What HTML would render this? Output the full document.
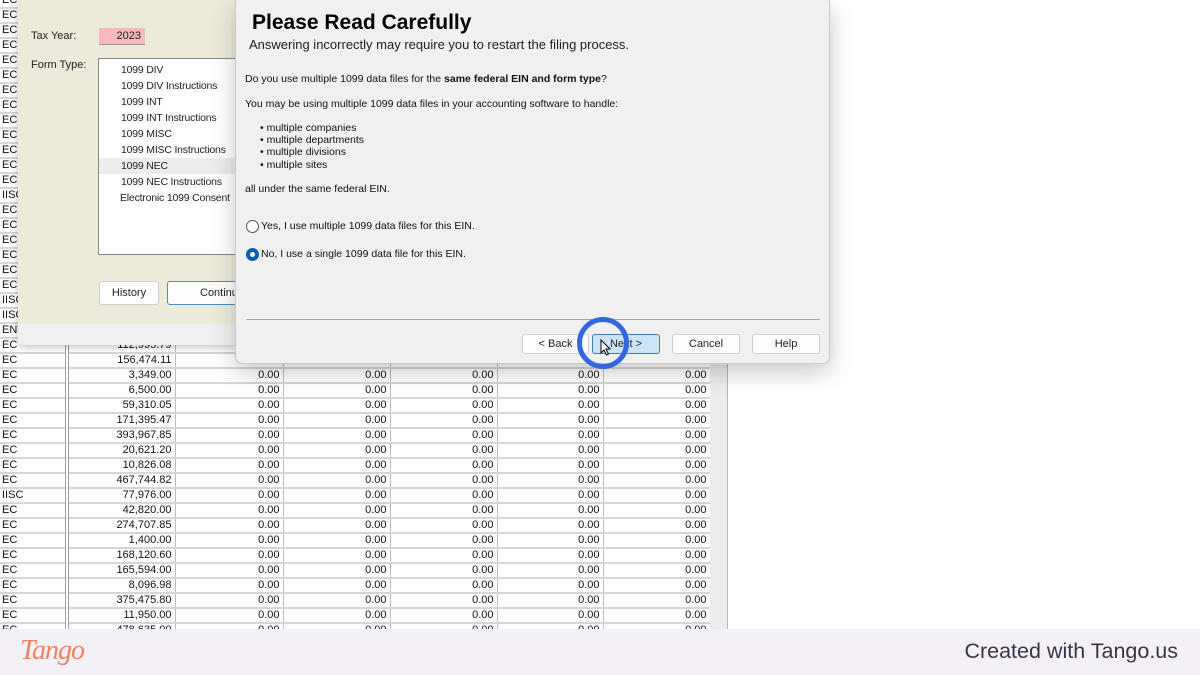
<!DOCTYPE html>
<html><head><meta charset="utf-8"><style>
*{margin:0;padding:0;box-sizing:border-box}
body{width:1200px;height:675px;overflow:hidden;background:#fff;font-family:"Liberation Sans",sans-serif;position:relative}
#tbl{position:absolute;left:0;top:-7px;border-collapse:collapse;table-layout:fixed;font-size:11px;color:#111}
#tbl td{height:15px;padding:0 3px;border-bottom:2px solid #d6d6d6;border-right:1px solid #bdbdbd;white-space:nowrap;overflow:hidden;text-align:right;line-height:13px;background:#fff}
#tbl td:first-child{text-align:left;padding-left:2px;border-right:4px double #a0a0a0}
.gray{position:absolute;left:710px;top:0;width:18px;height:630px;background:#ececec;border-right:1px solid #b8b8b8}
.left{position:absolute;left:18px;top:0;width:222px;height:345px;background:#ecead9;border-radius:0 0 6px 6px;box-shadow:0 2px 8px rgba(0,0,0,.25);font-size:11px;color:#222}
.left .strip{position:absolute;left:0;bottom:0;width:100%;height:21px;background:#f0f0f0;border-radius:0 0 6px 6px}
.dlg{position:absolute;left:235px;top:0;width:595px;height:364px;background:#f0f0f0;border:1px solid #c8c8c8;border-top:none;border-radius:0 0 7px 7px;box-shadow:0 8px 24px rgba(0,0,0,.22);font-size:10.5px;color:#111}
.btn{position:absolute;height:20px;background:#fdfdfd;border:1px solid #cfcfcf;border-radius:3px;text-align:center;line-height:18px;font-size:11px;color:#222}
.footer{position:absolute;left:0;top:629px;width:1200px;height:46px;background:#f3f1f6}
.radio{position:absolute;width:13px;height:13px;border-radius:50%;border:1px solid #555;background:#fff}
</style></head><body>
<table id="tbl">
<colgroup><col style="width:67px"><col style="width:108px"><col style="width:108px"><col style="width:107px"><col style="width:107px"><col style="width:106px"><col style="width:107px"></colgroup>
<tr><td>EC</td><td></td><td></td><td></td><td></td><td></td><td></td></tr>
<tr><td>EC</td><td></td><td></td><td></td><td></td><td></td><td></td></tr>
<tr><td>EC</td><td></td><td></td><td></td><td></td><td></td><td></td></tr>
<tr><td>EC</td><td></td><td></td><td></td><td></td><td></td><td></td></tr>
<tr><td>EC</td><td></td><td></td><td></td><td></td><td></td><td></td></tr>
<tr><td>EC</td><td></td><td></td><td></td><td></td><td></td><td></td></tr>
<tr><td>EC</td><td></td><td></td><td></td><td></td><td></td><td></td></tr>
<tr><td>EC</td><td></td><td></td><td></td><td></td><td></td><td></td></tr>
<tr><td>EC</td><td></td><td></td><td></td><td></td><td></td><td></td></tr>
<tr><td>EC</td><td></td><td></td><td></td><td></td><td></td><td></td></tr>
<tr><td>EC</td><td></td><td></td><td></td><td></td><td></td><td></td></tr>
<tr><td>EC</td><td></td><td></td><td></td><td></td><td></td><td></td></tr>
<tr><td>EC</td><td></td><td></td><td></td><td></td><td></td><td></td></tr>
<tr><td>IISC</td><td></td><td></td><td></td><td></td><td></td><td></td></tr>
<tr><td>EC</td><td></td><td></td><td></td><td></td><td></td><td></td></tr>
<tr><td>EC</td><td></td><td></td><td></td><td></td><td></td><td></td></tr>
<tr><td>EC</td><td></td><td></td><td></td><td></td><td></td><td></td></tr>
<tr><td>EC</td><td></td><td></td><td></td><td></td><td></td><td></td></tr>
<tr><td>EC</td><td></td><td></td><td></td><td></td><td></td><td></td></tr>
<tr><td>EC</td><td></td><td></td><td></td><td></td><td></td><td></td></tr>
<tr><td>IISC</td><td></td><td></td><td></td><td></td><td></td><td></td></tr>
<tr><td>IISC</td><td></td><td></td><td></td><td></td><td></td><td></td></tr>
<tr><td>ENT</td><td></td><td></td><td></td><td></td><td></td><td></td></tr>
<tr><td>EC</td><td>112,995.79</td><td></td><td></td><td></td><td></td><td></td></tr>
<tr><td>EC</td><td>156,474.11</td><td></td><td></td><td></td><td></td><td></td></tr>
<tr><td>EC</td><td>3,349.00</td><td>0.00</td><td>0.00</td><td>0.00</td><td>0.00</td><td>0.00</td></tr>
<tr><td>EC</td><td>6,500.00</td><td>0.00</td><td>0.00</td><td>0.00</td><td>0.00</td><td>0.00</td></tr>
<tr><td>EC</td><td>59,310.05</td><td>0.00</td><td>0.00</td><td>0.00</td><td>0.00</td><td>0.00</td></tr>
<tr><td>EC</td><td>171,395.47</td><td>0.00</td><td>0.00</td><td>0.00</td><td>0.00</td><td>0.00</td></tr>
<tr><td>EC</td><td>393,967.85</td><td>0.00</td><td>0.00</td><td>0.00</td><td>0.00</td><td>0.00</td></tr>
<tr><td>EC</td><td>20,621.20</td><td>0.00</td><td>0.00</td><td>0.00</td><td>0.00</td><td>0.00</td></tr>
<tr><td>EC</td><td>10,826.08</td><td>0.00</td><td>0.00</td><td>0.00</td><td>0.00</td><td>0.00</td></tr>
<tr><td>EC</td><td>467,744.82</td><td>0.00</td><td>0.00</td><td>0.00</td><td>0.00</td><td>0.00</td></tr>
<tr><td>IISC</td><td>77,976.00</td><td>0.00</td><td>0.00</td><td>0.00</td><td>0.00</td><td>0.00</td></tr>
<tr><td>EC</td><td>42,820.00</td><td>0.00</td><td>0.00</td><td>0.00</td><td>0.00</td><td>0.00</td></tr>
<tr><td>EC</td><td>274,707.85</td><td>0.00</td><td>0.00</td><td>0.00</td><td>0.00</td><td>0.00</td></tr>
<tr><td>EC</td><td>1,400.00</td><td>0.00</td><td>0.00</td><td>0.00</td><td>0.00</td><td>0.00</td></tr>
<tr><td>EC</td><td>168,120.60</td><td>0.00</td><td>0.00</td><td>0.00</td><td>0.00</td><td>0.00</td></tr>
<tr><td>EC</td><td>165,594.00</td><td>0.00</td><td>0.00</td><td>0.00</td><td>0.00</td><td>0.00</td></tr>
<tr><td>EC</td><td>8,096.98</td><td>0.00</td><td>0.00</td><td>0.00</td><td>0.00</td><td>0.00</td></tr>
<tr><td>EC</td><td>375,475.80</td><td>0.00</td><td>0.00</td><td>0.00</td><td>0.00</td><td>0.00</td></tr>
<tr><td>EC</td><td>11,950.00</td><td>0.00</td><td>0.00</td><td>0.00</td><td>0.00</td><td>0.00</td></tr>
<tr><td>EC</td><td>478,635.00</td><td>0.00</td><td>0.00</td><td>0.00</td><td>0.00</td><td>0.00</td></tr>
</table>
<div class="gray"></div>

<div class="left">
  <div style="position:absolute;left:13px;top:30px">Tax Year:</div>
  <div style="position:absolute;left:81px;top:28px;width:46px;height:17px;background:#f8b9bc;border-bottom:1px solid #999;text-align:right;padding-right:4px;line-height:17px">2023</div>
  <div style="position:absolute;left:13px;top:59px">Form Type:</div>
  <div style="position:absolute;left:80px;top:58px;width:150px;height:197px;background:#fff;border:1px solid #888;line-height:16px;font-size:10.5px;letter-spacing:-0.2px">
    <div style="padding:3px 0 0 22px">1099 DIV<br>1099 DIV Instructions<br>1099 INT<br>1099 INT Instructions<br>1099 MISC<br>1099 MISC Instructions</div>
    <div style="background:#ececec;padding-left:22px">1099 NEC</div>
    <div style="padding-left:22px">1099 NEC Instructions</div>
    <div style="padding-left:21px">Electronic 1099 Consent</div>
  </div>
  <div class="btn" style="left:81px;top:281px;width:60px;height:24px;line-height:22px">History</div>
  <div class="btn" style="left:149px;top:281px;width:90px;height:24px;line-height:22px;border-color:#4a8fc6;text-align:left;padding-left:32px">Continu</div>
  <div class="strip"></div>
</div>

<div class="dlg">
  <div style="position:absolute;left:16px;top:11px;font-size:21px;font-weight:bold;color:#000">Please Read Carefully</div>
  <div style="position:absolute;left:13px;top:37px;font-size:13px;color:#222">Answering incorrectly may require you to restart the filing process.</div>
  <div style="position:absolute;left:9px;top:73px">Do you use multiple 1099 data files for the <b>same federal EIN and form type</b>?</div>
  <div style="position:absolute;left:9px;top:98px">You may be using multiple 1099 data files in your accounting software to handle:</div>
  <div style="position:absolute;left:24px;top:122px;line-height:12.2px">• multiple companies<br>• multiple departments<br>• multiple divisions<br>• multiple sites</div>
  <div style="position:absolute;left:9px;top:183px">all under the same federal EIN.</div>
  <div class="radio" style="left:10px;top:220px"></div>
  <div style="position:absolute;left:25px;top:220px">Yes, I use multiple 1099 data files for this EIN.</div>
  <div class="radio" style="left:10px;top:248px;border:4px solid #0a5fb4"></div>
  <div style="position:absolute;left:25px;top:248px">No, I use a single 1099 data file for this EIN.</div>
  <div style="position:absolute;left:10px;top:319px;width:574px;height:1px;background:#a8a8a8"></div>
  <div class="btn" style="left:286px;top:334px;width:67px">&lt; Back</div>
  <div class="btn" style="left:356px;top:334px;width:68px;background:#cce4f7;border-color:#3f7fb5">Next &gt;</div>
  <div class="btn" style="left:436px;top:334px;width:68px">Cancel</div>
  <div class="btn" style="left:516px;top:334px;width:68px">Help</div>
</div>

<div style="position:absolute;left:577px;top:317px;width:52px;height:52px;border-radius:50%;border:5px solid #3466e0"></div>
<svg style="position:absolute;left:600px;top:339px" width="12" height="18" viewBox="0 0 12 18"><path d="M1 1 L1 14 L4 11 L6.5 16 L8.5 15 L6 10 L10 10 Z" fill="#fff" stroke="#000" stroke-width="1"/></svg>

<div class="footer">
  <div style="position:absolute;left:20px;top:6px;font-family:'Liberation Serif',serif;font-style:italic;font-size:28px;color:#f2825f;letter-spacing:-1px">Tango</div>
  <div style="position:absolute;right:22px;top:10px;font-size:21.5px;color:#3a3546">Created with Tango.us</div>
</div>
</body></html>
